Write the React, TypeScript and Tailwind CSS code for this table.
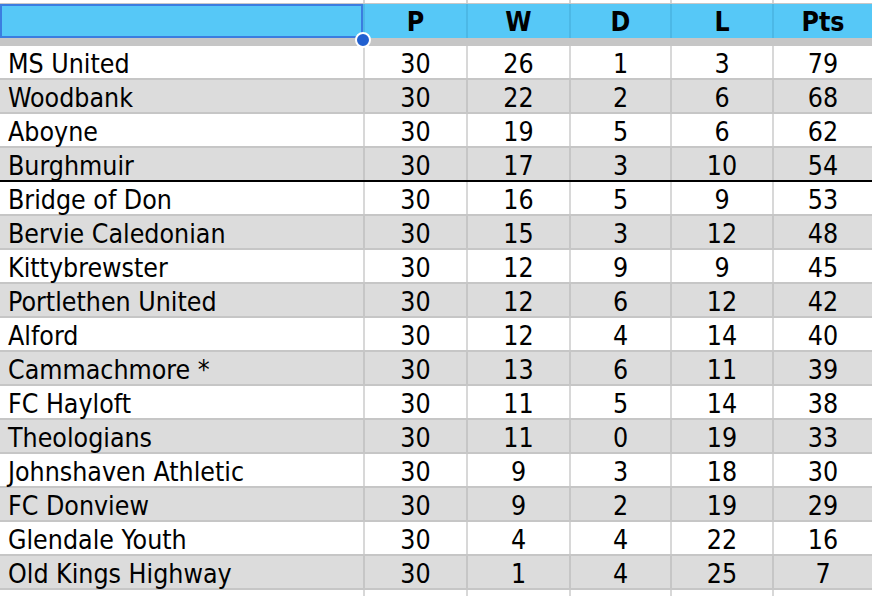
const rows: [string, number, number, number, number, number][] = [
  ['MS United', 30, 26, 1, 3, 79],
  ['Woodbank', 30, 22, 2, 6, 68],
  ['Aboyne', 30, 19, 5, 6, 62],
  ['Burghmuir', 30, 17, 3, 10, 54],
  ['Bridge of Don', 30, 16, 5, 9, 53],
  ['Bervie Caledonian', 30, 15, 3, 12, 48],
  ['Kittybrewster', 30, 12, 9, 9, 45],
  ['Portlethen United', 30, 12, 6, 12, 42],
  ['Alford', 30, 12, 4, 14, 40],
  ['Cammachmore *', 30, 13, 6, 11, 39],
  ['FC Hayloft', 30, 11, 5, 14, 38],
  ['Theologians', 30, 11, 0, 19, 33],
  ['Johnshaven Athletic', 30, 9, 3, 18, 30],
  ['FC Donview', 30, 9, 2, 19, 29],
  ['Glendale Youth', 30, 4, 4, 22, 16],
  ['Old Kings Highway', 30, 1, 4, 25, 7],
];

const cols = 'grid grid-cols-[363px_103px_103px_101px_102px_1fr]';

export default function App() {
  return (
    <div
      className="relative w-[872px] h-[596px] overflow-hidden bg-white text-black text-[26.5px] leading-none"
      style={{ fontFamily: '"DejaVu Sans Condensed", "DejaVu Sans", sans-serif', fontStretch: 'condensed' }}
    >
      {/* strip above header */}
      <div className={`${cols} h-[4px] border-b border-[#c8c8c8]`}>
        {[0, 1, 2, 3, 4, 5].map((i) => (
          <div key={i} className={i ? 'border-l-2 border-[#d4d4d4]' : ''} />
        ))}
      </div>

      {/* header */}
      <div className={`${cols} h-[34px] bg-[#56c8f7] font-bold`}>
        <div className="border-2 border-[#3b7de0]" />
        {['P', 'W', 'D', 'L', 'Pts'].map((h) => (
          <div key={h} className="flex items-center justify-center border-l-2 border-[#4cb8e6] pt-[3px]">
            {h}
          </div>
        ))}
      </div>
      <div className="h-[8px] bg-[#c6c6c6]" />

      {rows.map((r, i) => (
        <div
          key={r[0]}
          className={`${cols} h-[34px] border-b-2 ${i === 3 ? 'border-black' : 'border-[#c6c6c6]'} ${
            i % 2 ? 'bg-[#dcdcdc]' : 'bg-white'
          }`}
        >
          <div className="flex items-center pl-[8px] pt-[4px]">{r[0]}</div>
          {r.slice(1).map((v, j) => (
            <div
              key={j}
              className={`flex items-center justify-center pt-[4px] border-l-2 ${
                i % 2 ? 'border-[#c6c6c6]' : 'border-[#d8d8d8]'
              }`}
            >
              {v}
            </div>
          ))}
        </div>
      ))}
      <div className={`${cols} h-[10px]`}>
        {[0, 1, 2, 3, 4, 5].map((i) => (
          <div key={i} className={i ? 'border-l-2 border-[#d8d8d8]' : ''} />
        ))}
      </div>

      {/* selection handle */}
      <div className="absolute left-[355px] top-[32px] w-[16px] h-[16px] rounded-full bg-[#2160d0] border-2 border-white" />
    </div>
  );
}
